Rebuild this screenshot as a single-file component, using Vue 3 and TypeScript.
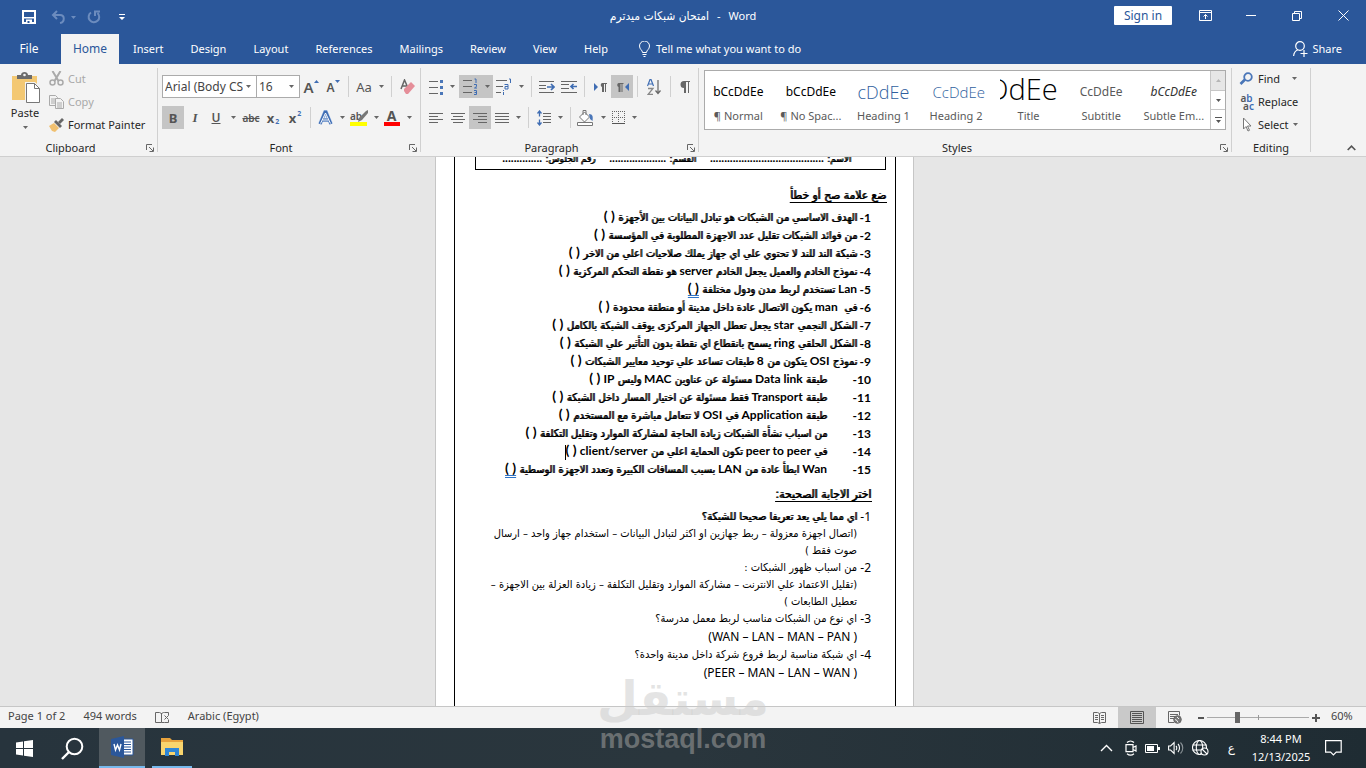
<script setup lang="ts">
import { ref } from 'vue'

interface StyleItem { sample: string; label: string; kind: string }
interface Question { n: number; text: string; flagged?: boolean; caret?: boolean }
interface Choice { n: number; text: string; bold?: boolean; lines: string[]; latin?: boolean }
interface Run { text: string; latin: boolean }

const tabs: string[] = ['Insert', 'Design', 'Layout', 'References', 'Mailings', 'Review', 'View', 'Help']

const styles: StyleItem[] = [
  { sample: 'bCcDdEe', label: '¶ Normal', kind: 'normal' },
  { sample: 'bCcDdEe', label: '¶ No Spac...', kind: 'normal' },
  { sample: 'cDdEe', label: 'Heading 1', kind: 'h1' },
  { sample: 'CcDdEe', label: 'Heading 2', kind: 'h2' },
  { sample: 'DdEe', label: 'Title', kind: 'title' },
  { sample: 'CcDdEe', label: 'Subtitle', kind: 'subtitle' },
  { sample: 'bCcDdEe', label: 'Subtle Em...', kind: 'subtle' },
]

const questions: Question[] = [
  { n: 1, text: 'الهدف الاساسي من الشبكات هو تبادل البيانات بين الأجهزة' },
  { n: 2, text: 'من فوائد الشبكات تقليل عدد الاجهزة المطلوبة في المؤسسة' },
  { n: 3, text: 'شبكة الند للند لا تحتوي علي اي جهاز يملك صلاحيات اعلي من الاخر' },
  { n: 4, text: 'نموذج الخادم والعميل يجعل الخادم server هو نقطة التحكم المركزية' },
  { n: 5, text: 'Lan تستخدم لربط مدن ودول مختلفة', flagged: true },
  { n: 6, text: 'في  man يكون الاتصال عادة داخل مدينة أو منطقة محدودة' },
  { n: 7, text: 'الشكل النجمي star يجعل تعطل الجهاز المركزى يوقف الشبكة بالكامل' },
  { n: 8, text: 'الشكل الحلقي ring يسمح بانقطاع اي نقطة بدون التأثير علي الشبكة' },
  { n: 9, text: 'نموذج OSI يتكون من 8 طبقات تساعد علي توحيد معايير الشبكات' },
  { n: 10, text: 'طبقة Data link مسئولة عن عناوين MAC وليس IP' },
  { n: 11, text: 'طبقة Transport فقط مسئولة عن اختيار المسار داخل الشبكة' },
  { n: 12, text: 'طبقة Application في OSI لا تتعامل مباشرة مع المستخدم' },
  { n: 13, text: 'من اسباب نشأة الشبكات زيادة الحاجة لمشاركة الموارد وتقليل التكلفة' },
  { n: 14, text: 'في peer to peer تكون الحماية اعلي من client/server', caret: true },
  { n: 15, text: 'Wan ابطأ عادة من LAN بسبب المسافات الكبيرة وتعدد الاجهزة الوسطية', flagged: true },
]

const choices: Choice[] = [
  {
    n: 1, bold: true, text: 'اي مما يلي يعد تعريفا صحيحا للشبكة؟',
    lines: ['(اتصال اجهزة معزولة – ربط جهازين او اكثر لتبادل البيانات – استخدام جهاز واحد – ارسال', 'صوت فقط )'],
  },
  {
    n: 2, text: 'من اسباب ظهور الشبكات :',
    lines: ['(تقليل الاعتماد علي الانترنت – مشاركة الموارد وتقليل التكلفة – زيادة العزلة بين الاجهزة –', 'تعطيل الطابعات )'],
  },
  { n: 3, text: 'اي نوع من الشبكات مناسب لربط معمل مدرسة؟', latin: true, lines: ['( WAN – LAN – MAN – PAN)'] },
  { n: 4, text: 'اي شبكة مناسبة لربط فروع شركة داخل مدينة واحدة؟', latin: true, lines: ['( PEER – MAN – LAN – WAN)'] },
]

function runs(text: string): Run[] {
  return text
    .split(/([A-Za-z0-9][A-Za-z0-9/ ]*[A-Za-z0-9]|[0-9])/)
    .filter((part) => part.length > 0)
    .map((part) => ({ text: part, latin: /[A-Za-z0-9]/.test(part) }))
}

const zoom = ref(29)
</script>

<template>
  <div class="app">
    <header class="titlebar">
      <div class="quick">
        <button class="ic save" aria-label="Save">
          <svg width="14" height="14" viewBox="0 0 14 14"><path d="M1 1h12v12H1z" fill="none" stroke="#fff" stroke-width="2" /><path d="M2 7h10v1.500H2zM4 9.500h6V13H4z" fill="#fff" /><path d="M5.500 11h2v2h-2z" fill="#2b579a" /></svg>
        </button>
        <button class="ic undo" aria-label="Undo">
          <svg width="15" height="14" viewBox="0 0 15 14" fill="none" stroke="#6c8cbe" stroke-width="2"><path d="M6 1L2 5l4 4M2 5h7c5 0 5 7 0 8" /></svg>
        </button>
        <button class="ic udrop" aria-label="Undo list"><svg width="5" height="3" viewBox="0 0 5 3"><path d="M0 0h5L2.500 3z" fill="#6c8cbe" /></svg></button>
        <button class="ic redo" aria-label="Redo">
          <svg width="14" height="14" viewBox="0 0 14 14" fill="none" stroke="#6c8cbe" stroke-width="2"><path d="M4 2.500A5.300 5.300 0 1 0 10.500 3M8 6V1.500h5" /></svg>
        </button>
        <button class="ic custom" aria-label="Customize"><svg width="6" height="6" viewBox="0 0 6 6"><path d="M0 0h6v1H0zM0 3h6L3 6z" fill="#fff" /></svg></button>
      </div>
      <h1 class="doctitle"><bdi>امتحان شبكات ميدترم</bdi><span>-</span><span>Word</span></h1>
      <div class="winctl">
        <button class="signin">Sign in</button>
        <button class="ic wide" aria-label="Ribbon options">
          <svg width="13" height="11" viewBox="0 0 13 11" fill="none" stroke="#fff"><path d="M.5.5h12v10H.5zM.5 2.500h12M6.500 9V4.500M4.500 6.500l2-2 2 2" /></svg>
        </button>
        <button class="ic win" aria-label="Minimize"><svg width="10" height="11" viewBox="0 0 10 11"><path d="M0 5h10v1H0z" fill="#fff" /></svg></button>
        <button class="ic win" aria-label="Restore"><svg width="10" height="10" viewBox="0 0 10 10" fill="none" stroke="#fff"><path d="M.5 2.500h7v7h-7zM2.500 2.500v-2h7v7h-2" /></svg></button>
        <button class="ic win" aria-label="Close"><svg width="11" height="11" viewBox="0 0 11 11" fill="none" stroke="#fff"><path d="M.5.5l10 10M10.500.5l-10 10" /></svg></button>
      </div>
    </header>

    <nav class="tabs">
      <button class="tab file">File</button>
      <button class="tab active">Home</button>
      <button v-for="t in tabs" :key="t" class="tab">{{ t }}</button>
      <button class="tab tell">
        <svg width="11" height="16" viewBox="0 0 11 16" fill="none" stroke="#fff"><path d="M3.500 11.500C3.500 9 .5 8.500.5 5a5 5 0 0 1 10 0c0 3.500-3 4-3 6.500zM3.500 13.500h4M4.500 15.500h2" /></svg>
        Tell me what you want to do
      </button>
      <button class="tab share">
        <svg width="15" height="16" viewBox="0 0 15 16" fill="none" stroke="#fff" stroke-width="1.200"><circle cx="7" cy="5" r="4.300" /><path d="M.6 15c.3-3.500 2-5.500 4.500-6.300M7.500 12.500h7M11 9v7" /></svg>
        Share
      </button>
    </nav>

    <section class="ribbon">
      <div class="group clipboard">
        <div class="cliprow">
          <button class="paste">
            <svg width="29" height="31" viewBox="0 0 29 31"><path d="M1 4h25v24H1z" fill="#f3c873" /><path d="M6 7V3h4c0-4 7-4 7 0h4v4z" fill="#6b6b6b" /><circle cx="13.500" cy="3" r="1.300" fill="#f3f3f3" /><path d="M14 10h10l5 5v16H14z" fill="#f3f3f3" /><path d="M15.500 11.500h8l5 5v14h-13z" fill="#fff" stroke="#777" /><path d="M23.500 11.500v5h5" fill="none" stroke="#777" /></svg>
            <span>Paste</span>
            <svg class="dd" width="5" height="3" viewBox="0 0 5 3"><path d="M0 0h5L2.500 3z" /></svg>
          </button>
          <div class="stack">
            <button class="cmd off">
              <svg width="15" height="15" viewBox="0 0 15 15" fill="none" stroke="#aaa" stroke-width="1.500"><path d="M3.500 0l6 10M11.500 0l-6 10" stroke-width="2" /><circle cx="3.500" cy="11.500" r="2.500" /><circle cx="11.500" cy="11.500" r="2.500" /></svg>
              Cut
            </button>
            <button class="cmd off">
              <svg width="15" height="14" viewBox="0 0 15 14" fill="#f3f3f3" stroke="#aaa"><path d="M.5.5h6l2 2v8h-8z" /><path d="M2 4h5M2 6h5M2 8h5" /><path d="M6.500 3.500h5l3 3v7h-8zM8 8h5M8 10h5M8 12h5" /></svg>
              Copy
            </button>
            <button class="cmd">
              <svg width="15" height="14" viewBox="0 0 15 14"><path d="M0 8l5-3 5 5-4 4-3-1z" fill="#f0c070" /><path d="M5 4l2-2 6 6-2 2z" fill="#666" /><path d="M9 4l4-4 2 2-4 4z" fill="#666" /></svg>
              Format Painter
            </button>
          </div>
        </div>
        <div class="glabel">Clipboard</div>
        <button class="launch" aria-label="Clipboard settings"><svg width="8" height="8" viewBox="0 0 8 8" fill="none" stroke="#666"><path d="M.5 6V.5H6M3 3l4 4M7.500 3.500v4h-4" /></svg></button>
      </div>

      <div class="group font">
        <div class="row">
          <label class="sel name"><select aria-label="Font"><option>Arial (Body CS)</option></select><svg class="dd" width="5" height="3" viewBox="0 0 5 3"><path d="M0 0h5L2.500 3z" /></svg></label>
          <label class="sel size"><select aria-label="Font size"><option>16</option></select><svg class="dd" width="5" height="3" viewBox="0 0 5 3"><path d="M0 0h5L2.500 3z" /></svg></label>
          <button class="b w22"><span class="gA">A</span><svg class="tri" width="5" height="3" viewBox="0 0 5 3"><path d="M0 3h5L2.500 0z" fill="#3f6db3" /></svg></button>
          <button class="b w22"><span class="gA sm">A</span><svg class="tri" width="5" height="3" viewBox="0 0 5 3"><path d="M0 0h5L2.500 3z" fill="#3f6db3" /></svg></button>
          <i class="sep" />
          <button class="b w34"><span class="aa">Aa</span><svg class="dd" width="5" height="3" viewBox="0 0 5 3"><path d="M0 0h5L2.500 3z" /></svg></button>
          <i class="sep" />
          <button class="b w22" aria-label="Clear formatting"><svg width="15" height="16" viewBox="0 0 15 16"><path d="M1 10L4.500 1 8 9M2.500 7h4" fill="none" stroke="#666" stroke-width="1.500" /><path d="M4 10l7-7 4 4-7 8H6l-2-3z" fill="#e58e99" /></svg></button>
        </div>
        <div class="row">
          <button class="b w22 on"><b>B</b></button>
          <button class="b w22"><em>I</em></button>
          <button class="b w20"><u>U</u></button>
          <button class="b w14" aria-label="Underline style"><svg class="dd" width="5" height="3" viewBox="0 0 5 3"><path d="M0 0h5L2.500 3z" /></svg></button>
          <button class="b w22"><s>abc</s></button>
          <button class="b w22"><span class="x">x</span><sub>2</sub></button>
          <button class="b w22"><span class="x">x</span><sup>2</sup></button>
          <i class="sep" />
          <button class="b w34" aria-label="Text effects"><svg width="15" height="16" viewBox="0 0 15 16" fill="none"><path d="M2 14L7 2h1l5 12M4 10h7" stroke="#c3d6f0" stroke-width="4" /><path d="M2 14L7 2h1l5 12M4.500 10h6" stroke="#3f6db3" stroke-width="3" /><path d="M2.500 13.500L7.500 3l5 10.500M4.500 10h6" stroke="#fff" stroke-width="1" /></svg><svg class="dd" width="5" height="3" viewBox="0 0 5 3"><path d="M0 0h5L2.500 3z" /></svg></button>
          <button class="b w34"><span class="hl">ab<svg width="10" height="12" viewBox="0 0 10 12"><path d="M10 0v3L4 10l-4 2 1-4 7-7z" fill="#777" /></svg></span><svg class="dd" width="5" height="3" viewBox="0 0 5 3"><path d="M0 0h5L2.500 3z" /></svg></button>
          <button class="b w34"><span class="fc">A</span><svg class="dd" width="5" height="3" viewBox="0 0 5 3"><path d="M0 0h5L2.500 3z" /></svg></button>
        </div>
        <div class="glabel">Font</div>
        <button class="launch" aria-label="Font settings"><svg width="8" height="8" viewBox="0 0 8 8" fill="none" stroke="#666"><path d="M.5 6V.5H6M3 3l4 4M7.500 3.500v4h-4" /></svg></button>
      </div>

      <div class="group para">
        <div class="row">
          <button class="b w34" aria-label="Bullets"><svg width="14" height="16" viewBox="0 0 14 16"><path d="M0 2h9v1H0zM0 8h9v1H0zM0 14h9v1H0z" fill="#666" /><path d="M11 1h3v3h-3zM11 7h3v3h-3zM11 13h3v3h-3z" fill="#4a76b8" /></svg><svg class="dd" width="5" height="3" viewBox="0 0 5 3"><path d="M0 0h5L2.500 3z" /></svg></button>
          <button class="b w34 on" aria-label="Numbering"><svg width="15" height="17" viewBox="0 0 15 17"><path d="M0 2h9v1H0zM0 8h9v1H0zM0 14h9v1H0z" fill="#666" /><path d="M11.500 1H13v4M11 6.500h2.500v2L11.500 10H14M11 12.500h2.500v4H11M11.500 14.500h2" fill="none" stroke="#3f6db3" /></svg><svg class="dd" width="5" height="3" viewBox="0 0 5 3"><path d="M0 0h5L2.500 3z" /></svg></button>
          <button class="b w34" aria-label="Multilevel list"><svg width="16" height="17" viewBox="0 0 16 17"><path d="M0 2h11v1H0zM0 8h7v1H0zM0 14h5v1H0z" fill="#666" /><path d="M13 1h1.500v4M8.500 6.500H12V11H9V8.500h3M7.500 12v1M7.500 14v3" fill="none" stroke="#3f6db3" /></svg><svg class="dd" width="5" height="3" viewBox="0 0 5 3"><path d="M0 0h5L2.500 3z" /></svg></button>
          <i class="sep" />
          <button class="b w22" aria-label="Decrease indent"><svg width="16" height="12" viewBox="0 0 16 12"><path d="M0 0h15v1H0zM0 4h7v1H0zM0 7h7v1H0zM0 11h15v1H0z" fill="#666" /><path d="M8 6h7M12 3l3 3-3 3" fill="none" stroke="#3f6db3" stroke-width="1.700" /></svg></button>
          <button class="b w22" aria-label="Increase indent"><svg width="16" height="12" viewBox="0 0 16 12"><path d="M0 0h16v1H0zM0 3h8v1H0zM0 7h8v1H0zM0 11h16v1H0z" fill="#666" /><path d="M10 5.500h6M12.500 3L10 5.500 12.500 8" fill="none" stroke="#3f6db3" stroke-width="1.700" /></svg></button>
          <i class="sep" />
          <button class="b w22" aria-label="Left to right"><svg width="13" height="10" viewBox="0 0 13 10"><path d="M0 1l4 4-4 4z" fill="#3f6db3" /><path d="M8 5a2.200 2.200 0 0 1 0-4h5v1h-1v8h-1V2h-1v8H8z" fill="#666" /></svg></button>
          <button class="b w22 on" aria-label="Right to left"><svg width="13" height="10" viewBox="0 0 13 10"><path d="M13 1L9 5l4 4z" fill="#3f6db3" /><path d="M2.500 5a2.200 2.200 0 0 1 0-4h5v1h-1v8h-1V2h-1v8h-2z" fill="#666" /></svg></button>
          <i class="sep" />
          <button class="b w24" aria-label="Sort"><svg width="14" height="16" viewBox="0 0 14 16" fill="none"><path d="M.5 7L3 .5h1L6.500 7M1.500 5h4" stroke="#3f6db3" stroke-width="1.200" /><path d="M1 9.500h5l-5 6h5" stroke="#888" stroke-width="1.300" /><path d="M11 1v13M8.500 11.500L11 14.500l2.500-3" stroke="#666" stroke-width="1.200" /></svg></button>
          <i class="sep" />
          <button class="b w20" aria-label="Show marks"><svg width="11" height="12" viewBox="0 0 11 12"><path d="M4 7a3.500 3.500 0 0 1 0-7h6v1H9v11H8V1H6v11H4z" fill="#666" /></svg></button>
        </div>
        <div class="row">
          <button class="b w22" aria-label="Align left"><svg width="14" height="10" viewBox="0 0 14 10"><path d="M0 0h14v1H0zM0 3h9v1H0zM0 6h14v1H0zM0 9h9v1H0z" fill="#666" /></svg></button>
          <button class="b w22" aria-label="Center"><svg width="14" height="10" viewBox="0 0 14 10"><path d="M0 0h14v1H0zM2 3h10v1H2zM0 6h14v1H0zM2 9h10v1H2z" fill="#666" /></svg></button>
          <button class="b w22 on" aria-label="Align right"><svg width="14" height="10" viewBox="0 0 14 10"><path d="M0 0h14v1H0zM5 3h9v1H5zM0 6h14v1H0zM5 9h9v1H5z" fill="#666" /></svg></button>
          <button class="b w34" aria-label="Justify"><svg width="14" height="10" viewBox="0 0 14 10"><path d="M0 0h14v1H0zM0 3h14v1H0zM0 6h14v1H0zM0 9h14v1H0z" fill="#666" /></svg><svg class="dd" width="5" height="3" viewBox="0 0 5 3"><path d="M0 0h5L2.500 3z" /></svg></button>
          <i class="sep" />
          <button class="b w34" aria-label="Line spacing"><svg width="14" height="16" viewBox="0 0 14 16"><path d="M6 3h8v1H6zM6 6h8v1H6zM6 9h8v1H6zM6 12h8v1H6z" fill="#666" /><path d="M2.500 1v5.500M.5 3.500l2-2.500 2 2.500M2.500 15V9.500M.5 12.500l2 2.500 2-2.500" fill="none" stroke="#3f6db3" stroke-width="1.300" /></svg><svg class="dd" width="5" height="3" viewBox="0 0 5 3"><path d="M0 0h5L2.500 3z" /></svg></button>
          <i class="sep" />
          <button class="b w34" aria-label="Shading"><svg width="17" height="16" viewBox="0 0 17 16"><path d="M2.500 7l5-5 5 5-5 5z" fill="#fff" stroke="#777" /><path d="M6 5V.5h3V5" fill="none" stroke="#777" /><path d="M12 4c4 0 4 3 3.500 7L13 9z" fill="#4a76b8" /><path d="M.5 12.500h15v3H.5z" fill="#fff" stroke="#777" /></svg><svg class="dd" width="5" height="3" viewBox="0 0 5 3"><path d="M0 0h5L2.500 3z" /></svg></button>
          <button class="b w34" aria-label="Borders"><svg width="13" height="13" viewBox="0 0 13 13"><path d="M0 .5h13M0 6.500h13M.5 0v13M6.500 0v13M12.500 0v13" fill="none" stroke="#666" stroke-dasharray="1 1" /><path d="M0 12h13v1H0z" fill="#555" /></svg><svg class="dd" width="5" height="3" viewBox="0 0 5 3"><path d="M0 0h5L2.500 3z" /></svg></button>
        </div>
        <div class="glabel">Paragraph</div>
        <button class="launch" aria-label="Paragraph settings"><svg width="8" height="8" viewBox="0 0 8 8" fill="none" stroke="#666"><path d="M.5 6V.5H6M3 3l4 4M7.500 3.500v4h-4" /></svg></button>
      </div>

      <div class="group styles">
        <div class="gallery">
          <div class="cards">
            <button v-for="s in styles" :key="s.label" class="card">
              <span class="sample" :class="s.kind"><span>{{ s.sample }}</span></span>
              <span class="cap">{{ s.label }}</span>
            </button>
          </div>
          <div class="scroll">
            <button class="dim" aria-label="Up"><svg width="5" height="3" viewBox="0 0 5 3"><path d="M0 3h5L2.500 0z" fill="#b5b5b5" /></svg></button>
            <button aria-label="Down"><svg width="5" height="3" viewBox="0 0 5 3"><path d="M0 0h5L2.500 3z" fill="#555" /></svg></button>
            <button aria-label="More"><svg width="7" height="6" viewBox="0 0 7 6"><path d="M0 0h7v1H0zM1 3h5L3.500 6z" fill="#555" /></svg></button>
          </div>
        </div>
        <div class="glabel">Styles</div>
        <button class="launch" aria-label="Style settings"><svg width="8" height="8" viewBox="0 0 8 8" fill="none" stroke="#666"><path d="M.5 6V.5H6M3 3l4 4M7.500 3.500v4h-4" /></svg></button>
      </div>

      <div class="group editing">
        <div class="stack">
          <button class="cmd">
            <svg width="15" height="13" viewBox="0 0 15 13" fill="none" stroke="#4a76b8"><circle cx="9" cy="5" r="3.800" stroke-width="1.800" /><path d="M6 7.500L1.500 12" stroke-width="2.600" /></svg>
            Find <svg class="dd far" width="5" height="3" viewBox="0 0 5 3"><path d="M0 0h5L2.500 3z" /></svg>
          </button>
          <button class="cmd">
            <span class="rep" aria-hidden="true"><span>a<b>b</b></span><span class="low">a<b>c</b></span></span>
            Replace
          </button>
          <button class="cmd">
            <svg width="15" height="15" viewBox="0 0 15 15"><path d="M4.500 1v11l2.500-2.500 2 4.500 1.500-.7-2-4.300H12z" fill="#fff" stroke="#777" /></svg>
            Select<svg class="dd" width="5" height="3" viewBox="0 0 5 3"><path d="M0 0h5L2.500 3z" /></svg>
          </button>
        </div>
        <div class="glabel">Editing</div>
      </div>
      <button class="collapse" aria-label="Collapse the ribbon"><svg width="9" height="6" viewBox="0 0 9 6"><path d="M.7 5l3.800-3.800L8.300 5" fill="none" stroke="#555" stroke-width="1.700" /></svg></button>
    </section>

    <main class="canvas">
      <article class="page" dir="rtl" lang="ar">
        <div class="frame">
          <div class="idbox">
            <p><span>الاسم:</span> <i>........................................</i></p>
            <p><span>القسم:</span> <i>....................</i></p>
            <p><span>رقم الجلوس:</span> <i>..............</i></p>
          </div>
          <h2>ضع علامة صح أو خطأ</h2>
          <ol class="quiz">
            <li v-for="q in questions" :key="q.n" :class="{ deep: q.n > 9 }">
              <span class="num">{{ q.n }}-</span>
              <span class="q"><span class="strong"><template v-for="(r, i) in runs(q.text)" :key="i"><span v-if="r.latin" class="lat">{{ r.text }}</span><template v-else>{{ r.text }}</template></template></span> <span class="lat par" :class="{ flag: q.flagged }">( )</span><i v-if="q.caret" class="caret" /></span>
            </li>
          </ol>
          <h2 class="second">اختر الاجابة الصحيحة:</h2>
          <ol class="quiz mcq">
            <li v-for="c in choices" :key="c.n">
              <span class="num">{{ c.n }}-</span>
              <div class="q">
                <p :class="{ strong: c.bold }">{{ c.text }}</p>
                <p v-for="l in c.lines" :key="l" :class="{ opts: c.latin }">{{ l }}</p>
              </div>
            </li>
          </ol>
        </div>
      </article>
    </main>

    <footer class="status">
      <span>Page 1 of 2</span>
      <span>494 words</span>
      <svg width="15" height="13" viewBox="0 0 15 13" fill="none" stroke="#666"><path d="M6.500 2v9.500H.5V1.500h4l2 1 2-1h1M6.500 11.500h3M9.500 1.500h4v3M13.500 9v2.500h-4M9.500 4.500l4 4M13.500 4.500l-4 4" /></svg>
      <span>Arabic (Egypt)</span>
      <div class="views">
        <button aria-label="Read mode"><svg width="13" height="12" viewBox="0 0 13 12" fill="none" stroke="#666"><path d="M6.500 1.500v10M.5.5h4l2 1 2-1h4v10h-4l-2 1-2-1h-4zM2 3.500h3M2 5.500h3M2 7.500h3M8 3.500h3M8 5.500h3M8 7.500h3" /></svg></button>
        <button class="on" aria-label="Print layout"><svg width="14" height="13" viewBox="0 0 14 13" fill="none" stroke="#555"><path d="M.5.5h13v12H.5zM2 2.500h10M2 4.500h10M2 6.500h10M2 8.500h10M2 10.500h10" /></svg></button>
        <button aria-label="Web layout"><svg width="14" height="13" viewBox="0 0 14 13" fill="none" stroke="#666"><path d="M6 11.500H.5V.5h11v4M2 3.500h8M2 5.500h5M2 7.500h4" /><circle cx="9.500" cy="8.500" r="3.800" fill="#777" /><path d="M7 8.500l2 1 1 2M9 6l2 2" stroke="#eee" /></svg></button>
      </div>
      <div class="zoomer">
        <button aria-label="Zoom out"><svg width="6" height="8" viewBox="0 0 6 8"><path d="M0 3h6v2H0z" fill="#555" /></svg></button>
        <input v-model="zoom" type="range" min="0" max="100" aria-label="Zoom">
        <button aria-label="Zoom in"><svg width="8" height="8" viewBox="0 0 8 8"><path d="M3 0h2v3h3v2H5v3H3V5H0V3h3z" fill="#555" /></svg></button>
        <span>60%</span>
      </div>
    </footer>

    <div class="taskbar">
      <button class="tb" aria-label="Start"><svg width="17" height="17" viewBox="0 0 17 17" fill="#fff"><path d="M0 2.500L7 1.500V8H0zM8 1.300L17 0v8H8zM0 9h7v6.500l-7-1zM8 9h9v8l-9-1.300z" /></svg></button>
      <button class="tb" aria-label="Search"><svg width="23" height="23" viewBox="0 0 23 23" fill="none" stroke="#fff" stroke-width="2"><circle cx="13.500" cy="9.500" r="7.800" /><path d="M8 15l-7 7" stroke-width="2.400" /></svg></button>
      <button class="tb run cur" aria-label="Word document"><svg width="23" height="22" viewBox="0 0 23 22"><path d="M11 3h11v16H11z" fill="#fff" stroke="#2b579a" /><path d="M13 6h7M13 8.500h7M13 11h7M13 13.500h7M13 16h7" stroke="#2b579a" /><path d="M0 3l13-3v22L0 19z" fill="#2b579a" /><path d="M3 8l1.500 6L6.500 9l2 5L10 8" fill="none" stroke="#fff" stroke-width="1.400" /></svg></button>
      <button class="tb run" aria-label="File Explorer"><svg width="23" height="18" viewBox="0 0 23 18"><path d="M0 0h9l2 2h11v15H0z" fill="#e8a33d" /><path d="M0 4h22v13H0z" fill="#f9d56e" /><path d="M4 18v-8h14v8h-4v-4H8v4z" fill="#2f86d6" /></svg></button>
      <div class="tray">
        <button class="chev" aria-label="Hidden icons"><svg width="13" height="8" viewBox="0 0 13 8" fill="none" stroke="#fff" stroke-width="1.400"><path d="M1 7l5.500-5.500L12 7" /></svg></button>
        <button aria-label="Meet now"><svg width="12" height="16" viewBox="0 0 12 16" fill="none" stroke="#fff" stroke-width="1.200"><path d="M1 4.600h7v7H1zM8 7.500l3-1.500v5l-3-1.500M2 2.500C4 .5 7 .5 9 2.500M2 13.800c2 1.600 5 1.600 7 0" /></svg></button>
        <button aria-label="Battery"><svg width="15" height="9" viewBox="0 0 15 9"><path d="M.5.5h12v8H.5z" fill="none" stroke="#fff" /><path d="M2 2h7v5H2zM13 3h2v3h-2z" fill="#fff" /></svg></button>
        <button aria-label="Volume"><svg width="16" height="14" viewBox="0 0 16 14" fill="none" stroke="#fff" stroke-width="1.100"><path d="M.6 5h2l3.500-3.500v11L2.600 9h-2zM8 5c1 1 1 3 0 4M10 3c2 2 2 6 0 8" /><path d="M12.500 1.500c3 3 3 8 0 11" stroke="#8b9397" /></svg></button>
        <button aria-label="Network"><svg width="17" height="16" viewBox="0 0 17 16" fill="none" stroke="#fff" stroke-width="1.100"><circle cx="7.500" cy="7.500" r="7" /><ellipse cx="7.500" cy="7.500" rx="3.200" ry="7" /><path d="M.5 5h14M.5 10h10" /><circle cx="12.500" cy="11.500" r="3.500" fill="#1f2c33" /><path d="M10 9l5 5" /></svg></button>
        <button class="lang">ع</button>
        <button class="clock"><span>8:44 PM</span><span>12/13/2025</span></button>
        <button aria-label="Notifications"><svg width="17" height="16" viewBox="0 0 17 16" fill="none" stroke="#fff" stroke-width="1.200"><path d="M.6.600h15.600v11.600h-5l-2.800 2.800-2.800-2.800h-5z" /></svg></button>
      </div>
    </div>

    <div class="mark" aria-hidden="true">
      <span class="mark-ar">مستقل</span>
      <span class="mark-en">mostaql.com</span>
    </div>
  </div>
</template>

<style>
body { margin: 0; }
</style>

<style scoped>
* { box-sizing: border-box; }
.app {
  position: relative;
  height: 100vh;
  display: flex;
  flex-direction: column;
  overflow: hidden;
  font: 12px/16px "Noto Sans", "DejaVu Sans", sans-serif;
  color: #262626;
  background: #e6e6e6;
}
button { font: inherit; color: inherit; background: none; border: 0; padding: 0; margin: 0; display: flex; align-items: center; }
svg { display: block; flex: none; }
.dd path { fill: #666; }

.titlebar { flex: none; height: 34px; background: #2b579a; color: #fff; display: grid; grid-template-columns: 1fr auto 1fr; align-items: center; }
.quick { display: flex; align-items: center; padding-left: 22px; }
.undo { margin-left: 15px; }
.udrop { margin-left: 5px; }
.redo { margin-left: 11px; }
.custom { margin-left: 18px; }
.doctitle { margin: 0; font: inherit; font-size: 11px; display: flex; gap: 8px; padding-bottom: 2px; }
.doctitle bdi { font-size: 12px; font-family: "DejaVu Sans Condensed", "DejaVu Sans", sans-serif; }
.winctl { display: flex; justify-content: flex-end; align-items: center; padding-bottom: 3px; height: 34px; }
.signin { background: #fff; color: #2b579a; height: 19px; width: 58px; justify-content: center; border-radius: 1px; margin-right: 10px; }
.wide, .win { width: 46px; justify-content: center; height: 30px; }

.tabs { flex: none; height: 30px; background: #2b579a; color: #fff; display: flex; font-size: 11px; }
.tab { padding: 0 13px 0 14px; height: 30px; white-space: nowrap; }
.tab.file, .tab.active { font-size: 12px; justify-content: center; }
.tab.file { width: 61px; padding: 0 3px 0 0; }
.tab.active { background: #f3f3f3; color: #2b579a; width: 58px; padding: 0; }
.tab.tell { padding-left: 18px; }
.tab svg { margin-right: 6px; }
.tab.share { margin-left: auto; padding-right: 24px; }
.share svg { margin-right: 4px; }

.ribbon { flex: none; height: 93px; background: #f3f3f3; border-bottom: 1px solid #cfcfcf; display: flex; position: relative; }
.group { position: relative; flex: none; }
.group::after { content: ""; position: absolute; right: 0; top: 4px; bottom: 4px; width: 1px; background: #d0d0d0; }
.clipboard { width: 158px; }
.font { width: 263px; padding: 11px 0 0 4px; }
.para { width: 278px; padding: 11px 0 0 4px; }
.styles { flex: 1; padding: 6px 6px 0 5px; }
.editing { width: 79px; padding: 3px 0 0 7px; }
.glabel { position: absolute; left: 0; right: 17px; bottom: 0; height: 16px; line-height: 16px; text-align: center; font-size: 11px; }
.editing .glabel { right: 1px; }
.launch { position: absolute; right: 4px; bottom: 4px; }
.cliprow { display: flex; padding: 3px 0 0 8px; }
.paste { width: 34px; flex-direction: column; padding-top: 5px; font-size: 11px; margin-right: 7px; white-space: nowrap; }
.paste span { margin: 2px 0 5px; }
.stack { display: flex; flex-direction: column; }
.cmd { height: 23px; gap: 4px; font-size: 11px; white-space: nowrap; }
.cmd.off { color: #a9a9a9; }
.cmd .far { margin-left: 8px; }
.row { display: flex; align-items: center; height: 23px; margin-bottom: 8px; }
.b { height: 23px; justify-content: center; color: #555; gap: 7px; }
.b.on { background: #c5c5c5; }
.w14 { width: 14px; } .w20 { width: 20px; } .w22 { width: 22px; } .w24 { width: 24px; } .w34 { width: 34px; }
.row + .row .w34 { width: 33px; }
.sep { width: 1px; height: 21px; background: #d0d0d0; margin: 0 4px; }
.sel { height: 23px; background: #fff; border: 1px solid #ababab; display: flex; align-items: center; padding-right: 5px; }
.sel select { appearance: none; border: 0; background: none; font: inherit; color: #444; padding: 0 0 0 2px; margin-right: 3px; flex: 1; min-width: 0; overflow: hidden; text-overflow: clip; }
.name { width: 95px; }
.size { width: 43px; border-left: 0; }
.gA { font-size: 15px; font-weight: 600; }
.gA.sm { font-size: 12px; padding-top: 2px; }
.w22:has(.tri) { gap: 0; }
.tri { margin-bottom: 11px; }
.aa { font-size: 13px; }
.b em { font: italic 700 13px "Liberation Serif", serif; }
.b b { font-size: 13px; }
.b u { font-size: 12px; font-weight: 600; }
.b s { font-size: 10px; font-weight: 600; }
.b .x { font-weight: 700; font-size: 13px; }
.b:has(.x) { gap: 1px; }
.b sub, .b sup { font-size: 7px; line-height: 8px; color: #3f6db3; font-weight: 700; }
.b sub { padding-top: 8px; vertical-align: baseline; }
.b sup { padding-bottom: 8px; vertical-align: baseline; }
.hl { display: flex; font-size: 10px; font-weight: 600; line-height: 12px; border-bottom: 4px solid #ff0; width: 17px; white-space: nowrap; }
.hl svg { margin-left: -4px; }
.fc { font-size: 14px; line-height: 13px; font-weight: 700; width: 16px; border-bottom: 4px solid #f00; }

.gallery { height: 60px; border: 1px solid #ababab; background: #fff; display: flex; }
.cards { flex: 1; display: flex; margin-left: -3px; }
.card { flex: 1; min-width: 0; flex-direction: column; color: #5a5a5a; font-size: 11px; padding-top: 6px; }
.sample { height: 30px; width: 58px; overflow: hidden; display: flex; align-items: center; justify-content: center; white-space: nowrap; color: #000; font: 12px/30px "Noto Sans", sans-serif; }
.cap { line-height: 18px; white-space: nowrap; }
.sample.h1, .sample.h2 { color: #2f5f9e; font-family: "Open Sans", sans-serif; }
.sample.h1 { font-size: 18px; }
.sample.h2 { font-size: 15px; justify-content: flex-end; }
.sample.h1, .sample.h2, .sample.title { font-weight: 300; }
.sample.title { font-family: "Open Sans", sans-serif; font-size: 29px; justify-content: flex-end; margin-top: -3px; margin-bottom: 3px; }
.sample.subtitle { color: #5a5a5a; }
.sample.subtle { font-style: italic; color: #333; }
.scroll { width: 15px; display: flex; flex-direction: column; border-left: 1px solid #c6c6c6; }
.scroll button { flex: 1; justify-content: center; border-top: 1px solid #c6c6c6; }
.scroll .dim { background: #e6e6e6; border-top: 0; }
.rep { width: 15px; display: flex; flex-direction: column; font-size: 10px; line-height: 8px; font-weight: 600; color: #555; }
.rep b { color: #3f6db3; font-weight: 600; }
.rep .low { text-align: right; }
.collapse { margin: auto 10px 5px auto; padding-left: 36px; }

.canvas { flex: 1; min-height: 0; overflow: hidden; display: flex; justify-content: center; padding-right: 17px; }
.page { width: 479px; background: #fff; border: solid #c6c6c6; border-width: 0 1px; padding: 0 17px 0 18px; font: 11px/18px "DejaVu Sans Condensed", "DejaVu Sans", sans-serif; color: #000; }
.frame { height: 100%; border: solid #000; border-width: 0 1px; padding: 0 9px 0 20px; }
.idbox { height: 13px; border: solid #000; border-width: 0 1px 1px; display: flex; align-items: flex-end; gap: 14px; padding: 0 34px 1px 0; font-weight: 400; font-size: 10px; line-height: 18px; white-space: nowrap; }
.idbox p, .mcq p { margin: 0; }
.idbox i { font: 700 12px/1 Lato, sans-serif; }
.idbox span, .strong, .frame h2 { text-shadow: 1px 0 0 #000; }
.frame h2 { margin: 16px 0 5px; font-size: 12px; line-height: 18px; font-weight: 400; text-decoration: underline 1px; text-decoration-skip-ink: none; text-underline-offset: 3px; }
.frame h2.second { margin: 6px 15px 5px 0; }
.quiz { list-style: none; margin: 0; padding: 0 15px 0 0; white-space: pre; }
.quiz li { display: flex; line-height: 18px; }
.num { width: 14px; flex: none; font-family: Lato, sans-serif; font-size: 12px; font-weight: 700; }
.deep .num { width: 44px; }
.lat { font-family: Lato, sans-serif; font-size: 12px; font-weight: 700; line-height: 1; text-shadow: none; }
.par { font-size: 14px; }
.flag { text-decoration: underline double 1px #2f75c8; text-decoration-skip-ink: none; text-underline-offset: 2px; }
.caret { display: inline-block; width: 1px; height: 15px; background: #000; vertical-align: middle; }
.mcq .num { font-family: "Noto Sans", sans-serif; font-weight: 400; }
.mcq li, .mcq p { line-height: 17px; }
.mcq p.opts { font-family: "Noto Sans", sans-serif; font-size: 12px; line-height: 19px; }

.status { flex: none; height: 22px; background: #f3f3f3; border-top: 1px solid #c6c6c6; display: flex; align-items: center; font-size: 11px; color: #444; padding-left: 8px; gap: 18px; }
.status span { padding-bottom: 3px; }
.views { margin-left: auto; display: flex; height: 21px; }
.views button { width: 38px; justify-content: center; }
.views .on { background: #c9c9c9; }
.zoomer { display: flex; align-items: center; width: 168px; margin-left: -14px; gap: 3px; }
.zoomer input { appearance: none; width: 102px; height: 12px; margin: 0; background: linear-gradient(#999, #999) center / 1px 5px no-repeat, linear-gradient(#aaa, #aaa) center / 100% 1px no-repeat; }
.zoomer input::-webkit-slider-thumb { appearance: none; width: 5px; height: 11px; background: #666; border: 0; }
.zoomer span { margin-left: 8px; }

.taskbar { flex: none; height: 40px; background: linear-gradient(90deg, #27343d, #2a363d 50%, #1f2c33); color: #fff; display: flex; }
.tb { width: 48px; justify-content: center; }
.run { width: 40px; border-bottom: 2px solid #76b9ed; margin-right: 5px; margin-left: 5px; }
.cur { width: 46px; background: #50595f; margin-left: 3px; margin-right: 2px; }
.tray { margin-left: auto; display: flex; align-items: center; gap: 8px; padding-right: 24px; }
.chev { margin-right: 4px; }
.lang { font: 12px "DejaVu Sans", sans-serif; margin-left: 11px; }
.clock { flex-direction: column; font-size: 11px; line-height: 18px; width: 64px; margin: 0 4px 0 6px; padding-bottom: 1px; }

.mark { position: absolute; left: 0; right: 0; bottom: 14px; display: flex; flex-direction: column; align-items: center; pointer-events: none; }
.mark-ar { font: 700 47px/50px "DejaVu Sans", sans-serif; color: rgba(205, 205, 205, .55); }
.mark-en { font: 700 27px/30px "Liberation Sans", sans-serif; color: rgba(150, 150, 150, .6); }
</style>
